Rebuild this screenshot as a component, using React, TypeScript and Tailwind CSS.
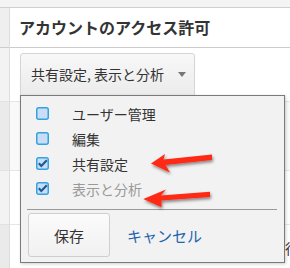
import React from "react";

function Box({ checked }: { checked: boolean }) {
  return (
    <svg width="13" height="13" viewBox="0 0 13 13" className="shrink-0">
      <rect x="0.75" y="0.75" width="11.5" height="11.5" rx="2" fill="#c9ddf6" stroke="#33a3e0" strokeWidth="1.5" />
      {checked && (
        <path d="M2.8 6.3 L5.3 9 L10.8 3.2" stroke="#1c5b95" strokeWidth="2.2" fill="none" strokeLinejoin="miter" />
      )}
    </svg>
  );
}

const items = [
  { label: "ユーザー管理", checked: false, dim: false },
  { label: "編集", checked: false, dim: false },
  { label: "共有設定", checked: true, dim: false },
  { label: "表示と分析", checked: true, dim: true },
];

export default function App() {
  return (
    <div className="relative w-[290px] h-[268px] overflow-hidden bg-white text-[#333] font-[family-name:'Noto_Sans_CJK_JP','Noto_Sans',sans-serif]">
      <div className="h-[8px] bg-[#f4f4f4] border-b border-[#d0d0d0]" />
      <div className="flex h-[260px]">
        <div className="w-[10px] shrink-0 flex flex-col border-r border-[#dddddd]">
          <div className="h-[40px] bg-[#efefef] border-b border-[#cccccc]" />
          <div className="h-[54px] bg-[#f3f3f3] border-b border-[#e2e2e2]" />
          <div className="h-[69px] bg-[#eaeaea] border-b border-[#e2e2e2]" />
          <div className="h-[54px] bg-[#f3f3f3] border-b border-[#e2e2e2]" />
          <div className="flex-1 bg-[#eaeaea]" />
        </div>
        <div className="flex-1 min-w-0 flex flex-col overflow-hidden">
          <div className="h-[40px] border-b border-[#cccccc] flex items-center pl-[9px] pb-[1px]">
            <span className="text-[16px] font-bold leading-none whitespace-nowrap">アカウントのアクセス許可</span>
          </div>
          <div className="h-[54px] border-b border-[#e6e6e6] pl-[10px] pt-[5px]">
            <div className="w-[175px] h-[44px] rounded-[3px] border border-[#d6d6d6] bg-gradient-to-b from-[#f8f8f8] to-[#ebebeb] shadow-[0_1px_1px_rgba(0,0,0,0.08)] flex items-center pl-[10px] pb-[2px]">
              <span className="text-[14px] leading-none whitespace-nowrap">共有設定, 表示と分析</span>
              <span className="ml-[14px] w-0 h-0 border-l-[4px] border-r-[4px] border-t-[5px] border-l-transparent border-r-transparent border-t-[#777]" />
            </div>
          </div>
          <div className="h-[69px] border-b border-[#e6e6e6] bg-[#f9f9f9]" />
          <div className="h-[54px] border-b border-[#e6e6e6]" />
          <div className="flex-1 pl-[275px] pt-[10px] whitespace-nowrap">
            <span className="text-[14px] leading-none">行</span>
          </div>
        </div>
      </div>

      <div className="absolute left-[20px] top-[95px] w-[265px] h-[168px] bg-[#f2f2f2] border border-[#7a7a7a] shadow-[1px_1px_3px_rgba(0,0,0,0.2)] flex flex-col pt-[5px]">
        {items.map((it) => (
          <div key={it.label} className="h-[25px] flex items-center pl-[15px]">
            <Box checked={it.checked} />
            <span className={`ml-[23px] text-[14px] leading-none ${it.dim ? "text-[#999]" : "text-[#333]"}`}>{it.label}</span>
          </div>
        ))}
        <div className="mt-[8px] ml-[6px] mr-[7px] h-px bg-[#9a9a9a]" />
        <div className="mt-[3px] flex items-center pl-[7px]">
          <div className="w-[82px] h-[44px] rounded-[3px] border border-[#cfcfcf] bg-gradient-to-b from-[#fbfbfb] to-[#f1f1f1] flex items-center justify-center">
            <span className="text-[15px] leading-none">保存</span>
          </div>
          <span className="ml-[17px] text-[15px] leading-none text-[#2463ad]">キャンセル</span>
        </div>
      </div>

      <svg className="absolute left-0 top-0" width="290" height="268" viewBox="0 0 290 268">
        <defs>
          <filter id="sh" x="-20%" y="-50%" width="140%" height="200%">
            <feDropShadow dx="1" dy="2" stdDeviation="1.5" floodColor="#000" floodOpacity="0.45" />
          </filter>
        </defs>
        <polygon
          points="151,163.5 165,154 163.5,159.6 212,154.6 212,160 165.5,165 170,172.5"
          fill="#ff2a12"
          filter="url(#sh)"
        />
        <polygon
          points="143.3,199 166,189.5 161,195.4 210,191.8 210,197 161.5,200.5 161.5,207.3"
          fill="#ff2a12"
          filter="url(#sh)"
        />
      </svg>
    </div>
  );
}
